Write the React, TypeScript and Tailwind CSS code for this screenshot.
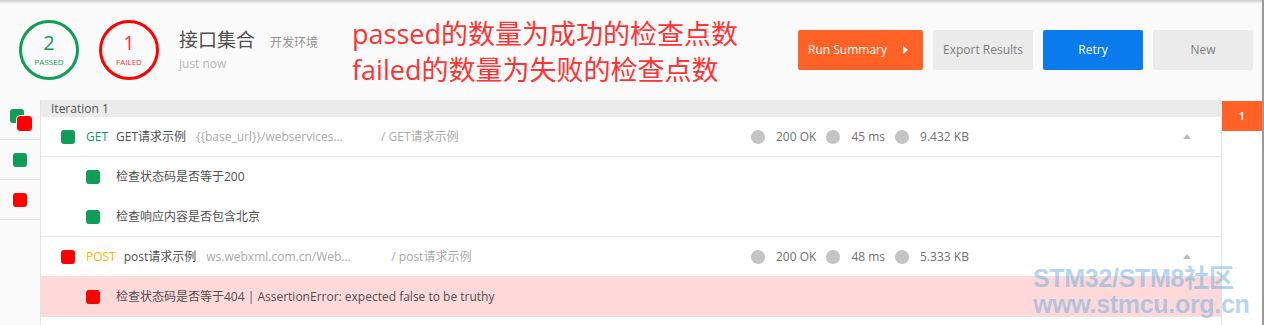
import React from 'react';

const FONT = { fontFamily: '"Open Sans", "Noto Sans CJK SC", sans-serif' };

type Stat = { status: string; time: string; size: string };

function Square({ color }: { color: 'green' | 'red' }) {
  return (
    <div
      className={`w-[14px] h-[14px] rounded-[3px] shrink-0 ${
        color === 'green' ? 'bg-[#0f9d58]' : 'bg-[#ff0000]'
      }`}
    />
  );
}

function Stats({ stat }: { stat: Stat }) {
  const items = [stat.status, stat.time, stat.size];
  return (
    <div className="flex items-center">
      {items.map((t, i) => (
        <div key={i} className={`flex items-center ${i > 0 ? 'ml-[10px]' : ''}`}>
          <div className="w-[14px] h-[14px] rounded-full bg-[#c4c4c4]" />
          <span className="ml-[11px] text-[12px] text-[#707070]">{t}</span>
        </div>
      ))}
    </div>
  );
}

function RequestRow({
  ok,
  method,
  name,
  url,
  path,
  stat,
}: {
  ok: boolean;
  method: string;
  name: string;
  url: string;
  path: string;
  stat: Stat;
}) {
  return (
    <div className="h-[40px] border-b border-[#e6e6e6] flex items-center pl-[20px] pr-[30px] bg-white">
      <div className="w-[690px] flex items-center">
        <Square color={ok ? 'green' : 'red'} />
        <span
          className={`ml-[11px] text-[12px] ${
            method === 'GET' ? 'text-[#0f9d58]' : 'text-[#ffb400]'
          }`}
        >
          {method}
        </span>
        <span className="ml-[8px] text-[12px] text-[#505050]">{name}</span>
        <span className="ml-[10px] w-[150px] text-[12px] text-[#aaaaaa] whitespace-nowrap">{url}</span>
        <span className="ml-[35px] text-[12px] text-[#aaaaaa]">{path}</span>
      </div>
      <Stats stat={stat} />
      <div className="ml-auto w-0 h-0 border-l-[4px] border-r-[4px] border-b-[5px] border-l-transparent border-r-transparent border-b-[#bdbdbd]" />
    </div>
  );
}

function TestRow({ ok, text, last }: { ok: boolean; text: string; last?: boolean }) {
  return (
    <div
      className={`h-[40px] flex items-center pl-[45px] ${
        ok ? 'bg-white' : 'bg-[#ffd9d9]'
      } ${last ? 'border-b border-[#e6e6e6]' : ''}`}
    >
      <Square color={ok ? 'green' : 'red'} />
      <span className="ml-[16px] text-[12px] text-[#505050]">{text}</span>
    </div>
  );
}

export default function App() {
  return (
    <div
      className="relative w-[1264px] h-[325px] overflow-hidden bg-white border-r-2 border-[#9a9a9a]"
      style={FONT}
    >
      {/* 顶部 */}
      <div className="relative h-[100px] bg-[#fafafa] flex items-center">
        <div className="absolute top-0 left-0 right-0 h-[4px] bg-linear-to-b from-[#cfcfcf] to-[#fafafa]" />
        <div className="ml-[19px] w-[60px] h-[60px] rounded-full border-[3px] border-[#0f9d58] flex flex-col items-center justify-center">
          <span className="text-[20px] leading-[22px] text-[#0f9d58]">2</span>
          <span className="text-[8px] leading-[12px] text-[#0f9d58] mt-[2px]">PASSED</span>
        </div>
        <div className="ml-[20px] w-[60px] h-[60px] rounded-full border-[3px] border-[#ff0000] flex flex-col items-center justify-center">
          <span className="text-[20px] leading-[22px] text-[#ff3333]">1</span>
          <span className="text-[8px] leading-[12px] text-[#ff3333] mt-[2px]">FAILED</span>
        </div>
        <div className="ml-[20px] w-[173px] flex flex-col mt-[-2px]">
          <div className="flex items-baseline">
            <span className="text-[19px] text-[#505050]">接口集合</span>
            <span className="ml-[15px] text-[12px] text-[#909090]">开发环境</span>
          </div>
          <span className="text-[12px] text-[#b5b5b5] leading-[16px] mt-[1px]">just now</span>
        </div>
        <div className="text-[27px] leading-[36px] text-[#ff3333] mt-[3px]">
          <div>passed的数量为成功的检查点数</div>
          <div>failed的数量为失败的检查点数</div>
        </div>
        <div className="ml-auto mr-[9px] flex gap-[10px]">
          <button className="w-[125px] h-[40px] rounded-[2px] bg-[#ff6126] text-white text-[12px] flex items-center pl-[10px]">
            Run Summary
            <span className="ml-[16px] w-0 h-0 border-t-[4px] border-b-[4px] border-l-[5px] border-t-transparent border-b-transparent border-l-white" />
          </button>
          <button className="w-[100px] h-[40px] rounded-[2px] bg-[#ebebeb] text-[#808080] text-[12px]">
            Export Results
          </button>
          <button className="w-[100px] h-[40px] rounded-[2px] bg-[#097bed] text-white text-[12px]">
            Retry
          </button>
          <button className="w-[100px] h-[40px] rounded-[2px] bg-[#ebebeb] text-[#808080] text-[12px]">
            New
          </button>
        </div>
      </div>

      {/* 主体 */}
      <div className="flex h-[225px]">
        <div className="w-[41px] bg-[#fafafa] border-r border-[#e3e3e3]">
          <div className="h-[40px] border-b border-[#e6e6e6] relative">
            <div className="absolute left-[10px] top-[9px] w-[14px] h-[14px] rounded-[3px] bg-[#0f9d58]" />
            <div className="absolute left-[16px] top-[15px] w-[17px] h-[17px] rounded-[4px] bg-[#ff0000] border-[1.5px] border-[#fafafa]" />
          </div>
          <div className="h-[40px] border-b border-[#e6e6e6] flex items-center justify-center">
            <Square color="green" />
          </div>
          <div className="h-[40px] border-b border-[#e6e6e6] flex items-center justify-center">
            <Square color="red" />
          </div>
        </div>

        <div className="flex-1 min-w-0">
          <div className="h-[17px] bg-[#ebebeb] pl-[10px] text-[12px] leading-[17px] text-[#555555]">
            Iteration 1
          </div>
          <RequestRow
            ok
            method="GET"
            name="GET请求示例"
            url="{{base_url}}/webservices..."
            path="/ GET请求示例"
            stat={{ status: '200 OK', time: '45 ms', size: '9.432 KB' }}
          />
          <TestRow ok text="检查状态码是否等于200" />
          <TestRow ok text="检查响应内容是否包含北京" last />
          <RequestRow
            ok={false}
            method="POST"
            name="post请求示例"
            url="ws.webxml.com.cn/Web..."
            path="/ post请求示例"
            stat={{ status: '200 OK', time: '48 ms', size: '5.333 KB' }}
          />
          <TestRow ok={false} text="检查状态码是否等于404 | AssertionError: expected false to be truthy" last />
        </div>

        <div className="w-[41px] border-l border-[#e3e3e3] bg-white">
          <div className="mt-[1px] h-[30px] bg-[#ff6126] flex items-center justify-center text-white text-[11px] font-semibold">
            1
          </div>
        </div>
      </div>

      {/* 水印 */}
      <div
        className="absolute left-[1033px] top-[265px] font-bold text-[25px] leading-[26px] text-[#6aaee0]/50 tracking-[-0.3px]"
        style={{ fontFamily: '"Liberation Sans", "Noto Sans CJK SC", sans-serif' }}
      >
        <div>STM32/STM8社区</div>
        <div>www.stmcu.org.cn</div>
      </div>
    </div>
  );
}
